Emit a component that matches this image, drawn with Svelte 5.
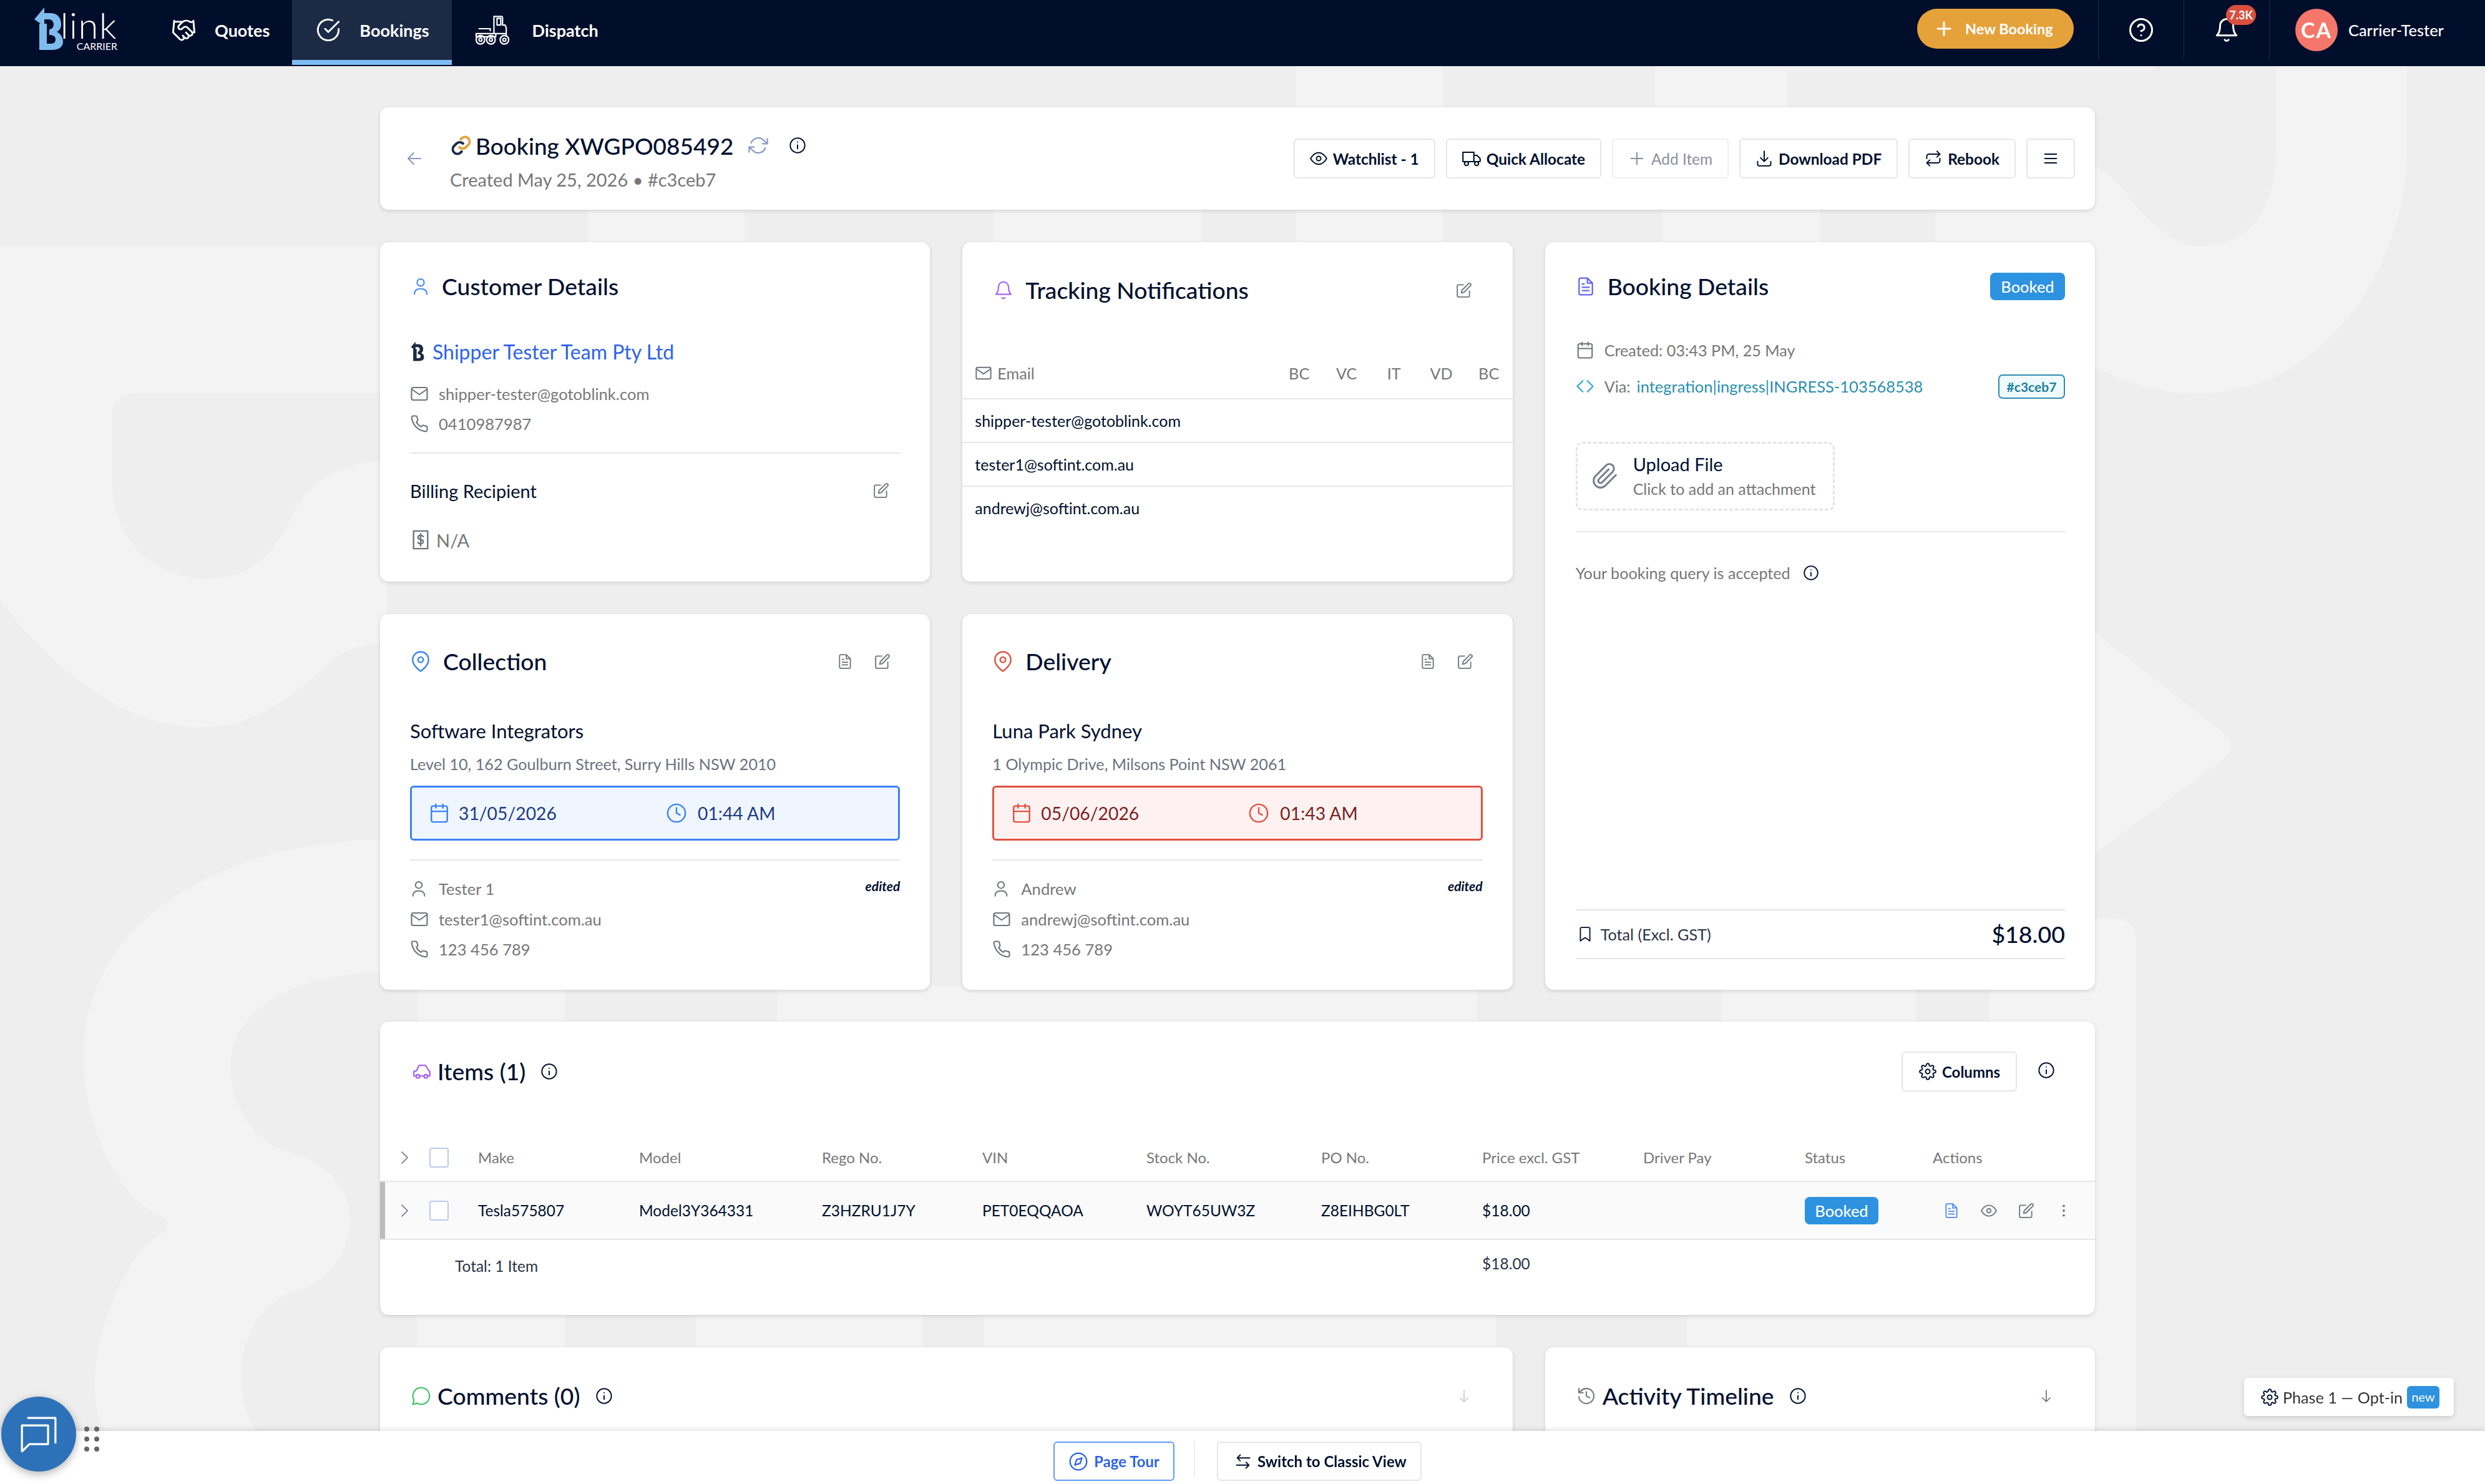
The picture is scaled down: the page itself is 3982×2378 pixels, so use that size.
<script>
  const P = {
    eye: 'M1 12s4-8 11-8 11 8 11 8-4 8-11 8-11-8-11-8z M15 12a3 3 0 1 1-6 0 3 3 0 0 1 6 0z',
    edit: 'M11 4H4a2 2 0 0 0-2 2v14a2 2 0 0 0 2 2h14a2 2 0 0 0 2-2v-7 M18.500 2.500a2.120 2.120 0 0 1 3 3L12 15l-4 1 1-4 9.500-9.500z',
    doc: 'M14 2H6a2 2 0 0 0-2 2v16a2 2 0 0 0 2 2h12a2 2 0 0 0 2-2V8z M14 2v6h6 M16 13H8 M16 17H8 M10 9H8',
    mail: 'M4 4h16a2 2 0 0 1 2 2v12a2 2 0 0 1-2 2H4a2 2 0 0 1-2-2V6a2 2 0 0 1 2-2z M22 6l-10 7L2 6',
    phone: 'M22 16.920v3a2 2 0 0 1-2.180 2 19.790 19.790 0 0 1-8.630-3.070 19.500 19.500 0 0 1-6-6 19.790 19.790 0 0 1-3.070-8.670A2 2 0 0 1 4.110 2h3a2 2 0 0 1 2 1.720 12.840 12.840 0 0 0 .7 2.810 2 2 0 0 1-.45 2.110L8.090 9.910a16 16 0 0 0 6 6l1.270-1.270a2 2 0 0 1 2.110-.45 12.840 12.840 0 0 0 2.810.7A2 2 0 0 1 22 16.920z',
    user: 'M4 22c0-5 3.500-7 8-7s8 2 8 7 M12 2.500a4.500 4.500 0 1 0 0 9 4.500 4.500 0 0 0 0-9z',
    bell: 'M18 8A6 6 0 0 0 6 8c0 7-3 9-3 9h18s-3-2-3-9 M13.730 21a2 2 0 0 1-3.460 0',
    pin: 'M21 10c0 7-9 13-9 13s-9-6-9-13a9 9 0 0 1 18 0z M15 10a3 3 0 1 1-6 0 3 3 0 0 1 6 0z',
    cal: 'M5 4h14a2 2 0 0 1 2 2v14a2 2 0 0 1-2 2H5a2 2 0 0 1-2-2V6a2 2 0 0 1 2-2z M16 2v4 M8 2v4 M3 10h18',
    clock: 'M12 2a10 10 0 1 0 0 20 10 10 0 0 0 0-20z M12 6v6l4 2',
    info: 'M12 2a10 10 0 1 0 0 20 10 10 0 0 0 0-20z M12 16.500v-5 M12 7.500h.01',
    help: 'M12 2a10 10 0 1 0 0 20 10 10 0 0 0 0-20z M9.090 9a3 3 0 0 1 5.830 1c0 2-3 3-3 3 M12 17h.01',
    refresh: 'M23 4v6h-6 M1 20v-6h6 M3.510 9a9 9 0 0 1 14.850-3.360L23 10 M1 14l4.640 4.360A9 9 0 0 0 20.490 15',
    plus: 'M12 4v16 M4 12h16',
    download: 'M12 2v14 M7 11l5 5 5-5 M3 16v4a2 2 0 0 0 2 2h14a2 2 0 0 0 2-2v-4',
    back: 'M20 12H4 M11 19l-7-7 7-7',
    down: 'M12 3v18 M18 15l-6 6-6-6',
    menu: 'M4 6h16 M4 12h16 M4 18h16',
    rebook: 'M17 2l4 4-4 4 M3 12V9a3 3 0 0 1 3-3h15 M7 22l-4-4 4-4 M21 12v3a3 3 0 0 1-3 3H3',
    truck: 'M1 4h14v12H1z M15 8h4l4 4v4h-8z M8 18.500a2.500 2.500 0 1 1-5 0 2.500 2.500 0 0 1 5 0z M21 18.500a2.500 2.500 0 1 1-5 0 2.500 2.500 0 0 1 5 0z',
    gear: 'M12 15a3 3 0 1 0 0-6 3 3 0 0 0 0 6z M19.400 15a1.650 1.650 0 0 0 .33 1.820l.06.06a2 2 0 0 1 0 2.830 2 2 0 0 1-2.830 0l-.06-.06a1.650 1.650 0 0 0-1.820-.33 1.650 1.650 0 0 0-1 1.510V21a2 2 0 0 1-2 2 2 2 0 0 1-2-2v-.09A1.650 1.650 0 0 0 9 19.400a1.650 1.650 0 0 0-1.820.33l-.06.06a2 2 0 0 1-2.830 0 2 2 0 0 1 0-2.830l.06-.06a1.650 1.650 0 0 0 .33-1.820 1.650 1.650 0 0 0-1.510-1H3a2 2 0 0 1-2-2 2 2 0 0 1 2-2h.09A1.650 1.650 0 0 0 4.600 9a1.650 1.650 0 0 0-.33-1.820l-.06-.06a2 2 0 0 1 0-2.830 2 2 0 0 1 2.830 0l.06.06a1.650 1.650 0 0 0 1.820.33H9a1.650 1.650 0 0 0 1-1.510V3a2 2 0 0 1 2-2 2 2 0 0 1 2 2v.09a1.650 1.650 0 0 0 1 1.510 1.650 1.650 0 0 0 1.820-.33l.06-.06a2 2 0 0 1 2.830 0 2 2 0 0 1 0 2.830l-.06.06a1.650 1.650 0 0 0-.33 1.820V9a1.650 1.650 0 0 0 1.510 1H21a2 2 0 0 1 2 2 2 2 0 0 1-2 2h-.09a1.650 1.650 0 0 0-1.510 1z',
    chev: 'M8 3l9 9-9 9',
    code: 'M9 5l-7 7 7 7 M15 5l7 7-7 7',
    clip: 'M21.440 11.050l-9.190 9.190a6 6 0 0 1-8.490-8.490l9.190-9.190a4 4 0 0 1 5.660 5.660l-9.200 9.190a2 2 0 0 1-2.830-2.830l8.490-8.480',
    mark: 'M19 22l-7-5-7 5V4a2 2 0 0 1 2-2h10a2 2 0 0 1 2 2z',
    chat: 'M12 2a10 10 0 0 0-8.700 15L2 22l5-1.300A10 10 0 1 0 12 2z',
    hist: 'M3 3v5h5 M3.050 13A9 9 0 1 0 6 5.300L3 8 M12 7v5l4 2',
    compass: 'M12 2a10 10 0 1 0 0 20 10 10 0 0 0 0-20z M16.240 7.760l-2.120 6.360-6.360 2.120 2.120-6.360z',
    swap: 'M21 7H4 M8 3L4 7l4 4 M3 17h17 M16 13l4 4-4 4',
    bill: 'M4 2h16v20H4z M15 8.500c-.5-1-1.500-1.500-3-1.500-1.700 0-3 .8-3 2.300 0 3 6 1.700 6 4.700 0 1.500-1.300 2.500-3 2.500-1.500 0-2.500-.5-3-1.500 M12 5v14',
    car: 'M6 17H3v-5l3-1 3-6h7l4 6 1 1v5h-3 M10 17h4 M9.500 17.500a2 2 0 1 1-4 0 2 2 0 0 1 4 0z M18.500 17.500a2 2 0 1 1-4 0 2 2 0 0 1 4 0z',
    shake: 'M11 17l2 2a1 1 0 1 0 3-3 M14 14l2.500 2.500a1 1 0 1 0 3-3l-3.880-3.880a3 3 0 0 0-4.240 0l-.88.88a1 1 0 1 1-3-3l2.810-2.810a5.790 5.790 0 0 1 7.060-.87l.47.28a2 2 0 0 0 1.420.25L21 4 M21 3l1 11h-2 M3 3L2 14l6.500 6.500a1 1 0 1 0 3-3 M3 4h8',
    check: 'M22 11.080V12a10 10 0 1 1-5.930-9.140 M22 4L12 14.010l-3-3',
    dots: 'M12 5h.01 M12 12h.01 M12 19h.01'
  };
  const B_PATH = 'M3 20 L19 1 V10 H29 C41 10 46 19 46 28 C46 34 43 38 39 40 C45 43 49 49 49 56 C49 65 41 69 31 69 H11 V27 H23 V59 H30 C35 59 37 56 37 52 C37 47 33 45 27 45 V36 C31 36 34 33 34 28 C34 24 31 20 27 20 H19 V31 Z';
  const heads = ['Make', 'Model', 'Rego No.', 'VIN', 'Stock No.', 'PO No.', 'Price excl. GST', 'Driver Pay', 'Status', 'Actions'];
  const cells = ['Tesla575807', 'Model3Y364331', 'Z3HZRU1J7Y', 'PET0EQQAOA', 'WOYT65UW3Z', 'Z8EIHBG0LT', '$18.00', ''];
  const emails = ['shipper-tester@gotoblink.com', 'tester1@softint.com.au', 'andrewj@softint.com.au'];
  const channels = ['BC', 'VC', 'IT', 'VD', 'BC'];
  const stops = [
    { tone: 'blue', title: 'Collection', name: 'Software Integrators', addr: 'Level 10, 162 Goulburn Street, Surry Hills NSW 2010', date: '31/05/2026', time: '01:44 AM', who: 'Tester 1', mail: 'tester1@softint.com.au', tel: '123 456 789' },
    { tone: 'red', title: 'Delivery', name: 'Luna Park Sydney', addr: '1 Olympic Drive, Milsons Point NSW 2061', date: '05/06/2026', time: '01:43 AM', who: 'Andrew', mail: 'andrewj@softint.com.au', tel: '123 456 789' }
  ];
</script>

{#snippet ic(name, cls)}
  <svg class="ic {cls}" viewBox="0 0 24 24" aria-hidden="true"><path d={P[name]} /></svg>
{/snippet}

<svg class="wm" viewBox="0 0 3982 2378" aria-hidden="true">
  <path d="M0 395H620V1032C575 1030 550 1045 530 1060C460 1125 400 1166 320 1166C180 1166 60 1040 0 962Z" />
  <path class="hole" d="M180 660C180 640 200 630 220 630H620V738C570 738 500 760 470 822C440 890 400 927 330 927C250 927 180 870 180 770Z" />
  <path d="M620 1345C400 1345 134 1450 134 1692C134 1820 200 1930 262 1950C272 1958 270 1972 258 1978C210 2000 152 2120 152 2218C152 2260 160 2280 170 2293H411C395 2270 387 2240 387 2204C387 2130 430 2080 474 2070C530 2050 561 2000 561 1958C561 1900 520 1860 462 1846C410 1830 370 1780 370 1706C370 1620 470 1558 620 1558Z" />
  <path d="M3647 106H3857V240C3857 420 3730 630 3524 630C3450 630 3400 610 3340 580V262C3370 270 3385 285 3400 300C3440 360 3490 395 3524 395C3600 395 3647 340 3647 240Z" />
  <path d="M3340 1000L3561 1173Q3590 1194 3561 1218L3340 1380Z" />
  <path d="M3340 1472H3390Q3423 1472 3423 1510V2293H3340Z" />
  <rect x="2077" y="106" width="235" height="290" />
  <rect x="2652" y="106" width="211" height="66" />
  <rect x="2652" y="106" width="801" height="6" />
  <rect x="943" y="336" width="250" height="60" />
  <rect x="1592" y="336" width="334" height="60" />
  <rect x="2663" y="336" width="254" height="60" />
  <rect x="3101" y="336" width="260" height="60" />
  <rect x="669" y="2100" width="237" height="70" />
  <rect x="1115" y="2100" width="363" height="70" />
  <rect x="1576" y="2100" width="821" height="70" />
  <rect x="2703" y="2100" width="720" height="70" />
  <rect x="670" y="1580" width="235" height="60" />
  <rect x="1245" y="1580" width="1122" height="60" />
  <rect x="2759" y="1580" width="311" height="60" />
  <rect x="3188" y="1580" width="170" height="60" />
</svg>

<header class="top">
  <div class="logo">
    <svg class="logoB" viewBox="0 0 52 70" aria-hidden="true"><path d={B_PATH} /></svg>
    <div class="logoText"><span class="lk">link</span><span class="cr">CARRIER</span></div>
  </div>
  <nav class="nav">
    <a class="navi n1">{@render ic('shake', 's41')}<span>Quotes</span></a>
    <a class="navi n2 on">{@render ic('check', 's40')}<span>Bookings</span></a>
    <a class="navi n3">
      <svg class="disp" viewBox="0 0 64 50" aria-hidden="true">
        <path d="M31 32V3h13l1 2v12h4l2 4v15 M36 6h6v11h-6z M6 23h19v4 M2 31h32v5H2z M34 31h17" />
        <circle cx="9" cy="41" r="7" /><circle cx="9" cy="41" r="2.500" />
        <circle cx="26" cy="41" r="7" /><circle cx="26" cy="41" r="2.500" />
        <circle cx="48" cy="41" r="7" /><circle cx="48" cy="41" r="2.500" />
      </svg>
      <span>Dispatch</span>
    </a>
  </nav>
  <div class="tr">
    <button class="newb">{@render ic('plus', 's30')}New Booking</button>
    <div class="cell">{@render ic('help', 's42')}</div>
    <div class="cell bellc">{@render ic('bell', 's42')}<span class="count">7.3K</span></div>
    <div class="cell usr"><span class="ava">CA</span><span class="un">Carrier-Tester</span></div>
  </div>
</header>

<main class="page">
  <section class="card tcard">
    <span class="backw">{@render ic('back', 's30 cSlate')}</span>
    <div class="tblock">
      <div class="tline">
        <svg class="linkic" viewBox="0 0 24 24" aria-hidden="true">
          <path class="la" d="M10 14a5 5 0 0 0 7 0l3-3a5 5 0 0 0-7-7l-1.500 1.500" />
          <path class="lb" d="M14 10a5 5 0 0 0-7 0l-3 3a5 5 0 0 0 7 7l1.500-1.500" />
        </svg>
        <h1>Booking XWGPO085492</h1>
        {@render ic('refresh', 's32 cSlate ml')}
        {@render ic('info', 's28 cInk ml2')}
      </div>
      <p class="created">Created May 25, 2026 • #c3ceb7</p>
    </div>
    <div class="acts">
      <button class="btn">{@render ic('eye', 's28')}Watchlist - 1</button>
      <button class="btn">{@render ic('truck', 's30')}Quick Allocate</button>
      <button class="btn off">{@render ic('plus', 's28')}Add Item</button>
      <button class="btn">{@render ic('download', 's28')}Download PDF</button>
      <button class="btn">{@render ic('rebook', 's28')}Rebook</button>
      <button class="btn burger">{@render ic('menu', 's28')}</button>
    </div>
  </section>

  <div class="grid">
    <section class="card cust">
      <div class="hd">{@render ic('user', 's30 cBlue')}<h2>Customer Details</h2></div>
      <div class="co">
        <svg class="coB" viewBox="0 0 52 70" aria-hidden="true"><path d={B_PATH} /></svg>
        <span>Shipper Tester Team Pty Ltd</span>
      </div>
      <div class="ln l1">{@render ic('mail', 's30 cGrey')}<span>shipper-tester@gotoblink.com</span></div>
      <div class="ln l2">{@render ic('phone', 's30 cGrey')}<span>0410987987</span></div>
      <hr class="div d1" />
      <div class="bill"><span>Billing Recipient</span>{@render ic('edit', 's26 cGrey')}</div>
      <div class="na">{@render ic('bill', 's34 cGrey')}<span>N/A</span></div>
    </section>

    <section class="card track">
      <div class="hd hdT">{@render ic('bell', 's32 cPurple')}<h2>Tracking Notifications</h2>{@render ic('edit', 's26 cGrey end')}</div>
      <div class="thead">
        {@render ic('mail', 's28 cGrey')}<span class="em">Email</span>
        <div class="chs">{#each channels as c}<span>{c}</span>{/each}</div>
      </div>
      {#each emails as e}<div class="trow">{e}</div>{/each}
    </section>

    <section class="card book">
      <div class="hd">{@render ic('doc', 's32 cIndigo')}<h2>Booking Details</h2><span class="badge end">Booked</span></div>
      <div class="ln b1">{@render ic('cal', 's30 cGrey')}<span>Created: 03:43 PM, 25 May</span></div>
      <div class="ln b2">
        {@render ic('code', 's30 cTeal')}<span>Via:</span><span class="via">integration|ingress|INGRESS-103568538</span>
        <span class="hash">#c3ceb7</span>
      </div>
      <div class="upload">
        {@render ic('clip', 's44 cGreyB')}
        <div><div class="u1">Upload File</div><div class="u2">Click to add an attachment</div></div>
      </div>
      <hr class="div d2" />
      <div class="q"><span>Your booking query is accepted</span>{@render ic('info', 's26 cInk')}</div>
      <div class="tot">{@render ic('mark', 's26 cInk')}<span class="tl">Total (Excl. GST)</span><span class="tv">$18.00</span></div>
    </section>

    {#each stops as s}
      <section class="card stop {s.tone}">
        <div class="hd hdS">{@render ic('pin', 's34 tone')}<h2>{s.title}</h2>{@render ic('doc', 's26 cGrey end')}{@render ic('edit', 's26 cGrey ml3')}</div>
        <div class="nm">{s.name}</div>
        <div class="ad">{s.addr}</div>
        <div class="dt">
          <span class="dc">{@render ic('cal', 's34 tone')}<span>{s.date}</span></span>
          <span class="dc">{@render ic('clock', 's34 tone')}<span>{s.time}</span></span>
        </div>
        <hr class="div d3" />
        <div class="ln s1">{@render ic('user', 's28 cGrey')}<span>{s.who}</span><em>edited</em></div>
        <div class="ln s2 s2a">{@render ic('mail', 's30 cGrey')}<span>{s.mail}</span></div>
        <div class="ln s2">{@render ic('phone', 's30 cGrey')}<span>{s.tel}</span></div>
      </section>
    {/each}

    <section class="card items">
      <div class="ihd">
        {@render ic('car', 's34 cPurple')}<h2 class="it">Items (1)</h2>{@render ic('info', 's28 cInk ml4')}
        <button class="btn cols end">{@render ic('gear', 's28')}Columns</button>
        {@render ic('info', 's28 cInk ml5')}
      </div>
      <div class="tg thd">
        <span class="c0">{@render ic('chev', 's24 cGrey')}</span><span class="c0"><i class="cb"></i></span>
        {#each heads as h}<span>{h}</span>{/each}
      </div>
      <div class="tg tbd">
        <span class="c0">{@render ic('chev', 's24 cGrey')}</span><span class="c0"><i class="cb"></i></span>
        {#each cells as c}<span>{c}</span>{/each}
        <span><b class="badge sm">Booked</b></span>
        <span class="ra">
          {@render ic('doc', 's26 cBlue')}{@render ic('eye', 's26 cGrey')}{@render ic('edit', 's26 cGrey')}{@render ic('dots', 's26 cGrey heavy')}
        </span>
      </div>
      <div class="tg tft">
        <span class="tc">Total: 1 Item</span><span class="tp">$18.00</span>
      </div>
    </section>

    <section class="card low wide">
      <div class="lhd">{@render ic('chat', 's32 cGreen')}<h2>Comments (0)</h2>{@render ic('info', 's28 cInk ml6')}{@render ic('down', 's24 cFaint end')}</div>
    </section>
    <section class="card low">
      <div class="lhd">{@render ic('hist', 's32 cGreyB')}<h2>Activity Timeline</h2>{@render ic('info', 's28 cInk ml6')}{@render ic('down', 's24 cGrey end')}</div>
    </section>
  </div>
</main>

<aside class="phase">{@render ic('gear', 's28 cInk')}<span>Phase 1 — Opt-in</span><b>new</b></aside>

<footer class="foot">
  <button class="btn tour">{@render ic('compass', 's32')}Page Tour</button>
  <i class="fdiv"></i>
  <button class="btn">{@render ic('swap', 's28')}Switch to Classic View</button>
</footer>

<button class="fab" aria-label="Chat">
  <svg viewBox="0 0 54 54" aria-hidden="true"><path d="M10 3h42v38 M2 14h39v28H13L2 53z" /></svg>
</button>
<div class="grip"><i></i><i></i><i></i><i></i><i></i><i></i></div>

<style>
  :global(html), :global(body) { margin: 0; height: 100%; overflow: hidden; background: #eeeeee; }
  :global(body) { font-family: "Lato", "Liberation Sans", sans-serif; color: #00102e; font-size: 25.2px; }
  :global(#app) { position: relative; height: 100vh; overflow: hidden; }
  button { font-family: inherit; }
  h1, h2, p { margin: 0; font-weight: 400; }
  hr { border: 0; }

  .wm { position: absolute; left: 0; top: 0; width: 3982px; height: 2378px; fill: #f3f3f3; }
  .wm .hole { fill: #eeeeee; }

  .ic { flex: none; fill: none; stroke: currentColor; stroke-width: 1.700; stroke-linecap: round; stroke-linejoin: round; }
  .s24 { width: 24px; height: 24px; } .s26 { width: 26px; height: 26px; } .s28 { width: 28px; height: 28px; }
  .s30 { width: 30px; height: 30px; } .s32 { width: 32px; height: 32px; } .s34 { width: 34px; height: 34px; }
  .s40 { width: 40px; height: 40px; } .s41 { width: 41px; height: 41px; } .s42 { width: 42px; height: 42px; } .s44 { width: 44px; height: 44px; }
  .cBlue { color: #4b8bf5; } .cGrey { color: #70747c; } .cGreyB { color: #7b8090; } .cPurple { color: #a868f5; }
  .cIndigo { color: #6366f1; } .cTeal { color: #2ca6cf; } .cInk { color: #00102e; } .cSlate { color: #8a9cc4; }
  .cGreen { color: #4bc46c; } .cFaint { color: #c9c9c9; }
  .heavy { stroke-width: 3.500; }
  .end { margin-left: auto; }

  /* header */
  .top { position: relative; z-index: 2; display: flex; align-items: flex-start; height: 106px; background: #000e2b; color: #fff; }
  .logo { display: flex; width: 140px; margin-left: 52px; height: 96px; }
  .logoB { width: 52px; height: 70px; margin-top: 11px; fill: #7fbcee; flex: none; }
  .logoText { display: flex; flex-direction: column; align-items: flex-end; width: 84px; }
  .lk { font-weight: 300; font-size: 58px; line-height: 46px; margin-top: 17px; letter-spacing: 1.500px; }
  .cr { font-size: 16px; line-height: 16px; font-weight: 400; margin-top: 3px; }
  .nav { display: flex; }
  .navi { display: flex; align-items: center; height: 96px; font-weight: 700; font-size: 27px; color: #fff; gap: 29px; }
  .navi.n1 { padding: 0 36px 0 82px; }
  .navi.n2 { padding: 0 36px 0 38px; gap: 30px; }
  .navi.n3 { padding: 0 0 0 37px; }
  .on { background: #1c2a46; border-bottom: 8px solid #7fbcf5; }
  .disp { width: 63px; height: 50px; fill: none; stroke: #fff; stroke-width: 2.200; stroke-linejoin: round; }
  .tr { margin-left: auto; display: flex; align-items: flex-start; }
  .newb { display: flex; align-items: center; gap: 19px; width: 251px; height: 64px; margin: 14px 39px 0 0; padding: 0 0 0 28px; border: 0; border-radius: 32px; background: #e5a23b; color: #fff; font-size: 23.500px; font-weight: 700; }
  .newb .ic { stroke-width: 2.500; }
  .cell { position: relative; display: flex; align-items: center; justify-content: center; width: 137px; height: 96px; border-left: 1.500px solid #1c2a46; box-sizing: border-box; }
  .count { position: absolute; left: 67px; top: 8px; width: 48px; height: 32px; border-radius: 16px; background: #d9503f; font-size: 18px; font-weight: 700; line-height: 32px; text-align: center; }
  .usr { width: 346px; justify-content: flex-start; padding-left: 41px; gap: 17px; border-left: 1.500px solid #1c2a46; }
  .ava { width: 68px; height: 68px; border-radius: 50%; background: #f5766a; font-size: 34px; font-weight: 700; line-height: 68px; text-align: center; letter-spacing: 2px; }
  .un { font-size: 25.400px; font-weight: 500; }

  /* page flow */
  .page { position: relative; width: 2748px; margin-left: 609px; padding-top: 66px; }
  .card { position: relative; background: #fff; border-radius: 14px; box-shadow: 0 2px 6px rgba(0, 0, 0, .13); box-sizing: border-box; }
  .tcard { display: flex; height: 164px; padding: 37px 32px 0 40px; }
  .backw { margin-top: 30px; width: 72px; flex: none; }
  .tblock { display: flex; flex-direction: column; }
  .tline { display: flex; align-items: center; height: 48px; }
  .linkic { width: 36px; height: 36px; fill: none; stroke-width: 2.600; stroke-linecap: round; margin-right: 5px; }
  .la { stroke: #e5a23b; } .lb { stroke: #1c2a46; }
  h1 { font-size: 37px; font-weight: 500; white-space: nowrap; }
  .ml { margin-left: 24px; } .ml2 { margin-left: 33px; } .ml3 { margin-left: 15px; } .ml4 { margin-left: 24px; } .ml5 { margin-left: 33px; } .ml6 { margin-left: 28px; }
  .created { margin-top: 13px; font-size: 29px; line-height: 36px; color: #777; }
  .acts { display: flex; gap: 17px; margin: 13px 0 0 auto; height: 64px; }
  .btn { display: flex; align-items: center; gap: 9px; height: 64px; padding: 0 24px; background: #fff; border: 2.500px solid #e5e5ec; border-radius: 6px; box-sizing: border-box; color: #00102e; font-size: 24.400px; font-weight: 700; white-space: nowrap; }
  .btn.off { color: #8b8f9c; font-weight: 400; border-color: #efeff3; }
  .btn.burger { padding: 0 23px; }

  .grid { display: grid; grid-template-columns: repeat(3, 1fr); grid-template-rows: 544px 602px 470px 300px; column-gap: 52px; row-gap: 51.500px; margin-top: 52px; }

  .hd { display: flex; align-items: center; gap: 19px; height: 38px; }
  h2 { font-size: 37.300px; line-height: 38px; font-weight: 500; white-space: nowrap; }
  .ln { display: flex; align-items: center; gap: 16px; height: 34px; color: #777; font-size: 25.600px; }
  .div { height: 2px; background: #e5e5ec; margin: 0; }

  .cust { padding: 52px 47px 0 48px; }
  .cust .hd .ic { margin-left: 2px; }
  .co { display: flex; align-items: center; gap: 12px; height: 38px; margin-top: 66px; color: #2d62ea; font-size: 32px; }
  .coB { width: 24px; height: 32px; fill: #1c2a46; }
  .l1 { margin-top: 32px; } .l2 { margin-top: 14px; }
  .d1 { margin-top: 29px; }
  .bill { display: flex; align-items: center; justify-content: space-between; height: 36px; margin-top: 41px; padding-right: 18px; font-size: 29px; }
  .na { display: flex; align-items: center; gap: 8px; height: 38px; margin-top: 42px; font-size: 29px; color: #777; }

  .track { padding-top: 58px; }
  .hdT { padding: 0 65px 0 50px; }
  .thead { display: flex; align-items: center; height: 60px; margin-top: 94px; padding: 0 0 20px 20px; box-sizing: border-box; color: #777; gap: 8px; }
  .chs { display: grid; grid-template-columns: repeat(5, 76px); margin-left: auto; text-align: center; }
  .trow { display: flex; align-items: center; height: 70px; box-sizing: border-box; padding: 0 0 0 20px; border-top: 2px solid #e5e5ec; font-size: 25px; }

  .book { grid-row: 1 / 3; grid-column: 3; display: flex; flex-direction: column; padding: 52px 48px 49px 49px; }
  .badge { display: inline-block; width: 120px; height: 44px; line-height: 44px; border-radius: 8px; background: #2d92e0; color: #fff; text-align: center; font-size: 25.400px; font-weight: 500; flex: none; }
  .b1, .b2 { font-size: 25.200px; }
  .b1 { margin-top: 66px; } .b2 { margin-top: 21.500px; gap: 16px; height: 39px; }
  .b2 .via { color: #2a8fb0; margin-left: -6px; font-size: 25.500px; }
  .hash { margin-left: auto; width: 107px; height: 39px; line-height: 35px; box-sizing: border-box; border: 2px solid #2d8cb0; border-radius: 7px; background: #eefafd; color: #1f7f9e; text-align: center; font-size: 21px; font-weight: 700; }
  .upload { flex: none; display: flex; align-items: center; gap: 23px; width: 415px; height: 110px; margin-top: 69px; padding-left: 22px; box-sizing: border-box; border: 3px dashed #e3e3ea; border-radius: 10px; }
  .u1 { font-size: 29px; line-height: 38px; }
  .u2 { font-size: 25px; line-height: 36px; color: #777; margin-top: 2px; }
  .d2 { margin-top: 33px; flex: none; }
  .q { display: flex; align-items: center; gap: 20px; margin-top: 47px; height: 36px; color: #777; }
  .tot { flex: none; display: flex; align-items: center; margin-top: auto; height: 80px; border-top: 2px solid #e5e5ec; border-bottom: 2px solid #e5e5ec; box-sizing: border-box; padding-left: 2px; gap: 12px; }
  .tl { color: #2b3345; font-size: 25.200px; }
  .tv { margin-left: auto; font-size: 37.500px; font-weight: 500; }

  .stop { padding: 58px 48px 0 48px; }
  .hdS { height: 36px; }
  .hdS .end { margin-left: auto; }
  .hdS .ml3 { margin-right: 15px; }
  .nm { margin-top: 75px; height: 36px; line-height: 36px; font-size: 31px; }
  .ad { margin-top: 18px; height: 34px; line-height: 34px; color: #6b7280; }
  .dt { display: grid; grid-template-columns: 380px 1fr; height: 88px; margin-top: 18px; padding-left: 27px; box-sizing: border-box; border: 3px solid; border-radius: 6px; font-size: 28.300px; }
  .dc { display: flex; align-items: center; gap: 14px; }
  .dc + .dc { gap: 17px; }
  .blue .tone { color: #3b82f6; } .red .tone { color: #e25141; }
  .blue .dt { border-color: #3b82f6; background: #eff6ff; color: #1e3a8a; }
  .red .dt { border-color: #e25141; background: #fdf2f1; color: #7f1d1d; }
  .d3 { margin-top: 30px; background: #e5e5e8; }
  .s1 { margin-top: 28px; gap: 18px; }
  .s1 em { margin: -8px 0 0 auto; font-size: 21px; font-weight: 700; font-style: italic; color: #00102e; }
  .s2 { margin-top: 13.500px; }
  .s2a { margin-top: 15.500px; }

  .items { grid-column: 1 / 4; padding-top: 48px; }
  .ihd { display: flex; align-items: center; height: 64px; padding: 0 64px 0 50px; }
  .it { margin-left: 8px; }
  .btn.cols { padding: 0 24px 0 26px; width: 185px; font-size: 24px; }
  .ihd > .ml5 { margin-top: -4px; }
  .tg { display: grid; grid-template-columns: 33px 46px 78px 258px 293px 257px 263px 280px 258px 258px 259px 205px 1fr; align-items: center; }
  .thd { height: 77px; margin-top: 68px; border-bottom: 2px solid #e5e5ec; box-sizing: border-box; color: #777; font-size: 24px; }
  .thd > :nth-child(1), .tbd > :nth-child(1) { grid-column: 2; }
  .c0 { display: flex; align-items: center; }
  .cb { display: block; width: 31px; height: 32px; box-sizing: border-box; border: 2.500px solid #bccbea; border-radius: 4px; background: #fff; }
  .thd .ic, .tbd .c0 .ic { margin-left: -6px; }
  .tbd { height: 93px; border-bottom: 2px solid #e5e5ec; box-sizing: border-box; background: #fafafa; box-shadow: inset 8px 0 0 #bbb; font-size: 24.500px; }
  .sm { width: 118px; }
  .ra { display: flex; align-items: center; gap: 34px; margin-left: 17px; }
  .tft { height: 90px; color: #2b3345; font-size: 24.500px; }
  .tc { grid-column: 1 / 10; padding-left: 120px; margin-top: -7px; }
  .tp { margin-top: -15px; }

  .wide { grid-column: 1 / 3; }
  .lhd { display: flex; align-items: center; gap: 10px; height: 38px; margin-top: 59px; padding: 0 66px 0 50px; }
  .low { overflow: hidden; }
  .lhd .ml6 { margin-left: 14px; }

  /* overlays */
  .phase { position: fixed; left: 3596px; top: 2208px; display: flex; align-items: center; gap: 7px; width: 336px; height: 61px; padding-left: 27px; box-sizing: border-box; background: #fff; border-radius: 6px; box-shadow: 0 3px 8px rgba(0, 0, 0, .15); z-index: 3; color: #333; }
  .phase b { width: 52px; height: 36px; line-height: 34px; border-radius: 6px; background: #2d92e0; color: #fff; font-size: 20px; font-weight: 400; text-align: center; }
  .foot { position: fixed; left: 0; right: 0; top: 2293px; height: 85px; background: #fff; box-shadow: 0 -2px 8px rgba(0, 0, 0, .12); z-index: 3; display: flex; justify-content: center; padding: 17px 16px 0 0; box-sizing: border-box; }
  .foot .btn { height: 63px; font-size: 24px; padding: 0 22px 0 26px; }
  .btn.tour { color: #2d62ea; border: 2px solid #5f9bfa; padding: 0 22px 0 22px; }
  .fdiv { display: block; width: 2px; height: 56px; margin: 0 35px 0 31px; background: #eee; }
  .fab { position: fixed; left: 2px; top: 2238px; width: 120px; height: 120px; padding: 0; border: 0; border-radius: 50%; background: #2d72b8; box-shadow: 0 4px 14px rgba(0, 0, 0, .3); z-index: 4; display: flex; align-items: center; justify-content: center; }
  .fab svg { width: 58px; height: 58px; fill: none; stroke: #fff; stroke-width: 3; stroke-linejoin: round; }
  .grip { position: fixed; left: 135px; top: 2286px; display: grid; grid-template-columns: 8px 8px; gap: 8px 8px; z-index: 4; }
  .grip i { display: block; width: 8px; height: 8px; border-radius: 50%; background: #666; }
</style>
